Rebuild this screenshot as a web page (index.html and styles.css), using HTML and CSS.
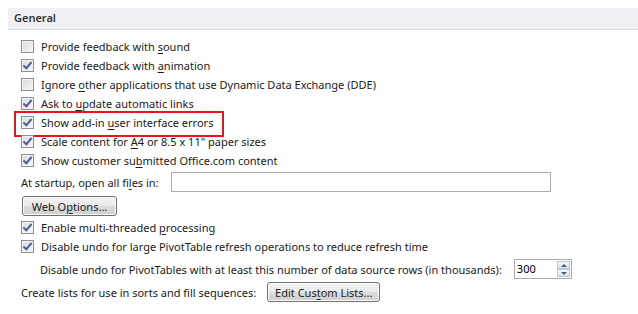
FILE: index.html
```html
<!DOCTYPE html>
<html lang="en">
<head>
<meta charset="UTF-8" />
<title>Excel Options - Advanced</title>
<link rel="stylesheet" href="styles.css">
</head>
<body>
  <div class="section">
    <div class="section-title">General</div>

    <div class="options">
      <label class="row"><span class="box"></span><span>Provide feedback with <u>s</u>ound</span></label>
      <label class="row"><span class="box checked"></span><span>Provide feedback with <u>a</u>nimation</span></label>
      <label class="row"><span class="box"></span><span>Ignore <u>o</u>ther applications that use Dynamic Data Exchange (DDE)</span></label>
      <label class="row"><span class="box checked"></span><span>Ask to <u>u</u>pdate automatic links</span></label>
      <label class="row highlight"><span class="box checked"></span><span>Show add-in <u>u</u>ser interface errors</span></label>
      <label class="row"><span class="box checked"></span><span>Scale content for <u>A</u>4 or 8.5 x 11" paper sizes</span></label>
      <label class="row"><span class="box checked"></span><span>Show customer su<u>b</u>mitted Office.com content</span></label>
    </div>

    <div class="startup">
      <span>At startup, open all fi<u>l</u>es in:</span>
      <span class="textbox"></span>
    </div>

    <div class="btn-row">
      <button class="btn">Web O<u>p</u>tions...</button>
    </div>

    <div class="options">
      <label class="row"><span class="box checked"></span><span>Enable multi-threaded <u>p</u>rocessing</span></label>
      <label class="row"><span class="box checked"></span><span>Disable undo for large PivotTable refresh operations to reduce refresh time</span></label>
    </div>

    <div class="pivot">
      <span>Disable undo for PivotTables with at least this number of data source rows (in thousands):</span>
      <span class="spin">
        <span class="spin-value">300</span>
        <span class="spin-buttons">
          <span class="spin-btn up"></span>
          <span class="spin-btn down"></span>
        </span>
      </span>
    </div>

    <div class="lists">
      <span>Create lists for use in sorts and fill sequences:</span>
      <button class="btn btn-lists">Edit Cus<u>t</u>om Lists...</button>
    </div>
  </div>
</body>
</html>
```

FILE: styles.css
```css
* {
  box-sizing: border-box;
}
body {
  margin: 0;
  background: #fff;
  font-family: 'Noto Sans', 'Segoe UI', sans-serif;
  font-size: 11px;
  color: #1a1a1a;
}
u {
  text-decoration-thickness: 1px;
  text-underline-offset: 2px;
}
.section {
  padding: 8px 0 0 8px;
}
.section-title {
  height: 22px;
  line-height: 20px;
  padding-left: 6px;
  background: #f0f0f4;
  border-bottom: 1px solid #dcdde1;
  color: #333;
  font-weight: 600;
}
.options {
  display: flex;
  flex-direction: column;
}
.section-title + .options {
  margin-top: 7px;
}
.row {
  display: flex;
  align-items: center;
  height: 19px;
  padding-left: 13px;
  white-space: nowrap;
}
.box {
  width: 13px;
  height: 13px;
  margin-right: 7px;
  border: 1px solid #8e8f8f;
  background: linear-gradient(135deg, #dcdcdc 0%, #f6f6f6 100%);
  box-shadow: inset 0 0 0 1px #f4f4f4;
  position: relative;
}
.box.checked::after {
  content: "";
  position: absolute;
  left: 3px;
  top: 0px;
  width: 3px;
  height: 7px;
  border: solid #4a5f9a;
  border-width: 0 2px 2px 0;
  transform: rotate(40deg);
}
.highlight {
  position: relative;
}
.highlight::before {
  content: "";
  position: absolute;
  left: 6px;
  top: -2px;
  width: 206px;
  height: 22px;
  border: 2px solid #e8151b;
}
.startup {
  display: flex;
  align-items: center;
  height: 20px;
  margin-top: 2px;
  padding-left: 13px;
  white-space: nowrap;
}
.textbox {
  width: 380px;
  height: 20px;
  margin-left: 12px;
  border: 1px solid #ababab;
}
.btn-row {
  margin-top: 4px;
  padding-left: 14px;
}
.btn {
  height: 20px;
  padding: 0 6px;
  font: inherit;
  color: #1a1a1a;
  white-space: nowrap;
  border: 1px solid #707070;
  border-radius: 3px;
  background: linear-gradient(#f2f2f2 0%, #ebebeb 50%, #dddddd 51%, #cfcfcf 100%);
  box-shadow: inset 0 0 0 1px #fcfcfc;
}
.btn-row .btn {
  width: 95px;
}
.btn-row + .options {
  margin-top: 2px;
}
.pivot {
  display: flex;
  align-items: center;
  height: 20px;
  margin-top: 3px;
  padding-left: 32px;
  white-space: nowrap;
}
.spin {
  display: flex;
  width: 58px;
  height: 20px;
  margin-left: 12px;
  border: 1px solid #ababab;
  background: #fff;
}
.spin-value {
  flex: 1;
  line-height: 18px;
  padding-left: 2px;
  color: #000;
}
.spin-buttons {
  display: flex;
  flex-direction: column;
  width: 15px;
  padding: 1px;
}
.spin-btn {
  flex: 1;
  position: relative;
  border: 1px solid #b9c9dc;
  background: linear-gradient(#f2f6fb, #d9e5f2);
}
.spin-btn::after {
  content: "";
  position: absolute;
  left: 3px;
  border-left: 3px solid transparent;
  border-right: 3px solid transparent;
}
.spin-btn.up::after {
  top: 2px;
  border-bottom: 3px solid #4d5c77;
}
.spin-btn.down::after {
  top: 2px;
  border-top: 3px solid #4d5c77;
}
.lists {
  display: flex;
  align-items: center;
  height: 20px;
  margin-top: 3px;
  padding-left: 13px;
  white-space: nowrap;
}
.btn-lists {
  width: 113px;
  margin-left: 11px;
}
```
